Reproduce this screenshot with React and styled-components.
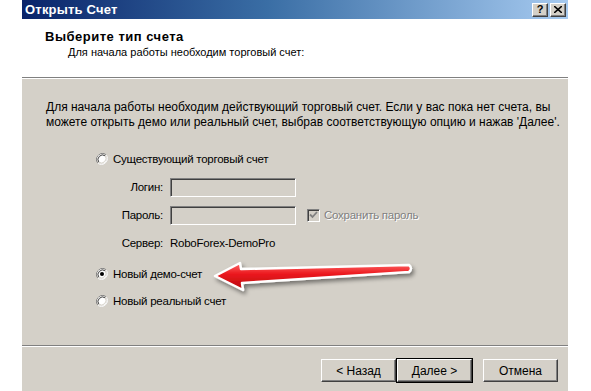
import React from 'react';
import styled, { createGlobalStyle } from 'styled-components';

const GlobalStyle = createGlobalStyle`
  html, body {
    margin: 0;
    padding: 0;
    background: #ffffff;
  }
  body {
    font-family: 'Liberation Sans', Arial, sans-serif;
    font-size: 12px;
    color: #000;
  }
`;

const Radio = ({ checked }) => (
  <RadioBox>
    <svg width="12" height="12" viewBox="0 0 12 12">
      <path d="M10.2 1.8 A6 6 0 0 0 1.8 10.2" fill="none" stroke="#808080" strokeWidth="1" />
      <path d="M1.8 10.2 A6 6 0 0 0 10.2 1.8" fill="none" stroke="#f4f4f4" strokeWidth="1" />
      <circle cx="6" cy="6" r="4.8" fill="#fff" />
      <path d="M9.2 2.8 A4.6 4.6 0 0 0 2.8 9.2" fill="none" stroke="#404040" strokeWidth="1" />
      <path d="M2.8 9.2 A4.6 4.6 0 0 0 9.2 2.8" fill="none" stroke="#d4d0c8" strokeWidth="1" />
      {checked && <circle cx="6" cy="6" r="2" fill="#000" />}
    </svg>
  </RadioBox>
);

// red callout arrow pointing at the demo option
const Arrow = () => (
  <ArrowLayer>
    <svg width="215" height="44" viewBox="0 0 215 44">
      <defs>
        <linearGradient id="arrowRed" x1="0" y1="0" x2="0" y2="1">
          <stop offset="0" stopColor="#ff6a6a" />
          <stop offset="0.4" stopColor="#ec1a1f" />
          <stop offset="1" stopColor="#b5060b" />
        </linearGradient>
        <filter id="arrowShadow" x="-10%" y="-30%" width="120%" height="170%">
          <feDropShadow dx="2" dy="3" stdDeviation="2" floodColor="#000" floodOpacity="0.45" />
        </filter>
      </defs>
      <path
        d="M3 19 L28 6 L29 12 L197 8 Q201 11.5 197 15 L30 26 L31 33 Z"
        fill="url(#arrowRed)"
        stroke="#ffffff"
        strokeWidth="2.5"
        strokeLinejoin="round"
        filter="url(#arrowShadow)"
      />
    </svg>
  </ArrowLayer>
);

const App = () => {
  return (
    <>
      <GlobalStyle />
      <Dialog>
        <TitleBar>
          <TitleText>Открыть Счет</TitleText>
          <Caption>
            <CaptionButton>?</CaptionButton>
            <CaptionButton>
              <svg width="8" height="7" viewBox="0 0 8 7">
                <path d="M0 0 L8 7 M8 0 L0 7" stroke="#000" strokeWidth="1.6" />
              </svg>
            </CaptionButton>
          </Caption>
        </TitleBar>

        <Header>
          <HeaderTitle>Выберите тип счета</HeaderTitle>
          <HeaderSub>Для начала работы необходим торговый счет:</HeaderSub>
        </Header>
        <Separator />

        <Body>
          <Intro>
            Для начала работы необходим действующий торговый счет. Если у вас пока нет счета, вы
            <br />
            можете открыть демо или реальный счет, выбрав соответствующую опцию и нажав 'Далее'.
          </Intro>

          <Options>
            <OptionRow>
              <Radio />
              <span>Существующий торговый счет</span>
            </OptionRow>

            <Fields>
              <Label>Логин:</Label>
              <Input />
              <span />
              <Label>Пароль:</Label>
              <Input />
              <SavePass>
                <Check>
                  <svg width="9" height="8" viewBox="0 0 9 8">
                    <path d="M1 3.5 L3.5 6 L8 1" fill="none" stroke="#808080" strokeWidth="1.8" />
                  </svg>
                </Check>
                <span>Сохранить пароль</span>
              </SavePass>
              <Label>Сервер:</Label>
              <Value>RoboForex-DemoPro</Value>
              <span />
            </Fields>

            <OptionRow $top={9}>
              <Radio checked />
              <span>Новый демо-счет</span>
            </OptionRow>
            <OptionRow $top={11}>
              <Radio />
              <span>Новый реальный счет</span>
            </OptionRow>
          </Options>

          <Arrow />
        </Body>
        <Separator />

        <Footer>
          <ButtonPair>
            <Button>&lt; Назад</Button>
            <Button $default>Далее &gt;</Button>
          </ButtonPair>
          <Button>Отмена</Button>
        </Footer>
      </Dialog>
    </>
  );
};

const Dialog = styled.div`
  margin-left: 22px;
  width: 546px;
  height: 391px;
  background: #d4d0c8;
  display: flex;
  flex-direction: column;
  overflow: hidden;
`;

const TitleBar = styled.div`
  height: 19px;
  flex: none;
  display: flex;
  align-items: center;
  justify-content: space-between;
  padding: 0 2px 0 3px;
  background: linear-gradient(to right, #0a246a 0%, #3a6ea5 45%, #a6caf0 100%);
`;

const TitleText = styled.div`
  color: #fff;
  font-weight: bold;
  font-size: 13px;
  letter-spacing: 0.2px;
`;

const Caption = styled.div`
  display: flex;
  gap: 2px;
`;

const CaptionButton = styled.div`
  width: 14px;
  height: 12px;
  background: #d4d0c8;
  border: 1px solid;
  border-color: #fff #404040 #404040 #fff;
  box-shadow: inset -1px -1px 0 #808080;
  display: flex;
  align-items: center;
  justify-content: center;
  font-weight: bold;
  font-size: 11px;
  line-height: 1;
`;

const Header = styled.div`
  height: 58px;
  flex: none;
  background: #fff;
  padding: 11px 0 0 23px;
  box-sizing: border-box;
`;

const HeaderTitle = styled.div`
  font-weight: bold;
  font-size: 13px;
  letter-spacing: 0.5px;
  line-height: 14px;
`;

const HeaderSub = styled.div`
  margin-top: 1px;
  padding-left: 23px;
  font-size: 11px;
  line-height: 14px;
`;

const Separator = styled.div`
  flex: none;
  height: 0;
  border-top: 1px solid #808080;
  border-bottom: 1px solid #fff;
`;

const Body = styled.div`
  position: relative;
  height: 266px;
  flex: none;
  box-sizing: border-box;
  padding: 21px 0 0 24px;
`;

const Intro = styled.div`
  line-height: 15px;
`;

const Options = styled.div`
  margin: 21px 0 0 50px;
  font-size: 11.5px;
  letter-spacing: -0.25px;
`;

const OptionRow = styled.div`
  display: flex;
  align-items: center;
  gap: 5px;
  height: 16px;
  margin-top: ${(p) => p.$top || 0}px;
`;

const RadioBox = styled.span`
  display: inline-flex;
  width: 12px;
  height: 12px;
`;

const Fields = styled.div`
  margin: 6px 0 0 0;
  display: grid;
  grid-template-columns: 67px 126px auto;
  grid-auto-rows: 28px;
  column-gap: 7px;
  align-items: center;
`;

const Label = styled.div`
  text-align: right;
`;

const Value = styled.div``;

const Input = styled.div`
  height: 19px;
  box-sizing: border-box;
  background: #d4d0c8;
  border: 1px solid;
  border-color: #808080 #fff #fff #808080;
  box-shadow: inset 1px 1px 0 #404040;
`;

const SavePass = styled.div`
  display: flex;
  align-items: center;
  gap: 4px;
  margin-left: 4px;
  color: #808080;
  text-shadow: 1px 1px 0 #fff;
`;

const Check = styled.span`
  width: 13px;
  height: 13px;
  box-sizing: border-box;
  background: #d4d0c8;
  border: 1px solid;
  border-color: #808080 #fff #fff #808080;
  box-shadow: inset 1px 1px 0 #404040;
  display: inline-flex;
  align-items: center;
  justify-content: center;
`;

const ArrowLayer = styled.div`
  position: absolute;
  left: 190px;
  top: 178px;
  line-height: 0;
`;

const Footer = styled.div`
  flex: 1;
  display: flex;
  justify-content: flex-end;
  align-items: flex-start;
  gap: 11px;
  padding: 12px 10px 0 0;
`;

const ButtonPair = styled.div`
  display: flex;
  gap: 1px;
`;

const Button = styled.button`
  width: 75px;
  height: 23px;
  box-sizing: border-box;
  font-family: 'Liberation Sans', Arial, sans-serif;
  font-size: 12px;
  color: #000;
  background: #d4d0c8;
  padding: 0;
  border: 1px solid;
  border-color: #fff #404040 #404040 #fff;
  box-shadow: inset -1px -1px 0 #808080;
  outline: ${(p) => (p.$default ? '1px solid #000' : 'none')};
`;

export default App;
